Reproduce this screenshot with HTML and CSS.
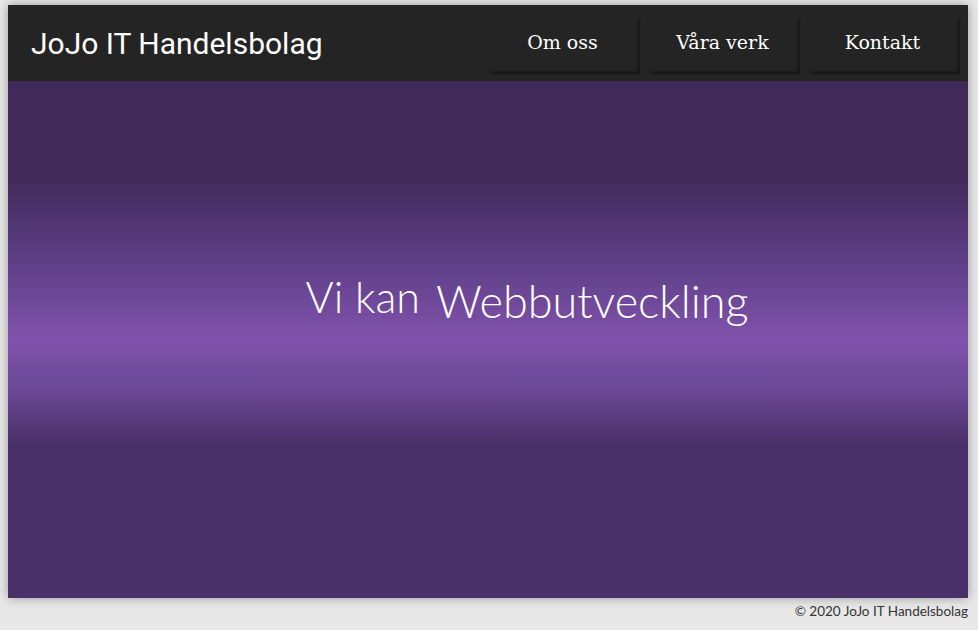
FILE: index.html
```html
<!DOCTYPE html>
<html lang="sv">
<head>
<meta charset="utf-8">
<title>JoJo IT Handelsbolag</title>
<link rel="stylesheet" href="styles.css">
</head>
<body>
<div class="page">
  <header class="header">
    <div class="brand">JoJo IT Handelsbolag</div>
    <nav class="nav">
      <a class="nav-btn" href="#">Om oss</a>
      <a class="nav-btn" href="#">Våra verk</a>
      <a class="nav-btn" href="#">Kontakt</a>
    </nav>
  </header>
  <main class="hero">
    <h1 class="tagline"><span class="lead">Vi kan</span><span class="word">Webbutveckling</span></h1>
  </main>
</div>
<footer class="footer">© 2020 JoJo IT Handelsbolag</footer>
</body>
</html>
```
FILE: styles.css
```css
html, body {
  margin: 0;
  padding: 0;
}
body {
  background: #e8e8e8;
  padding: 5px 10px 0 8px;
  font-family: "Lato", "Open Sans", sans-serif;
}
.page {
  width: 960px;
  box-shadow: 0 0 10px rgba(0,0,0,0.35);
}
.header {
  height: 76px;
  background: #242424;
  display: flex;
  align-items: center;
  justify-content: space-between;
  padding: 0 11px 0 23px;
  box-sizing: border-box;
}
.brand {
  font-family: "Roboto", sans-serif;
  font-size: 30px;
  color: #ffffff;
  margin-top: 1px;
}
.nav {
  display: flex;
  gap: 11px;
  align-self: flex-start;
  margin-top: 12px;
}
.nav-btn {
  width: 149px;
  height: 54px;
  display: flex;
  align-items: center;
  justify-content: center;
  background: #242424;
  box-shadow: 3px 3px 1px #1a1a1a;
  color: #ffffff;
  text-decoration: none;
  font-family: "DejaVu Serif", "Liberation Serif", serif;
  font-size: 19px;
  padding-bottom: 4px;
  box-sizing: border-box;
}
.hero {
  height: 517px;
  background: linear-gradient(to bottom,
    #402a5a 0%,
    #412b5b 19%,
    #5e3f87 35%,
    #8052ab 50%,
    #6a4896 60%,
    #4a3068 70%,
    #4a3068 100%);
  display: flex;
  justify-content: center;
  padding-top: 193px;
  box-sizing: border-box;
}
.tagline {
  margin: 0 0 0 78px;
  font-weight: 300;
  color: #ffffff;
  line-height: 1;
  white-space: nowrap;
}
.lead {
  font-size: 43px;
  margin-right: 16px;
}
.word {
  font-size: 45px;
  position: relative;
  top: 5px;
}
.footer {
  width: 960px;
  text-align: right;
  font-size: 13.5px;
  color: #333;
  padding-top: 5px;
}
```
